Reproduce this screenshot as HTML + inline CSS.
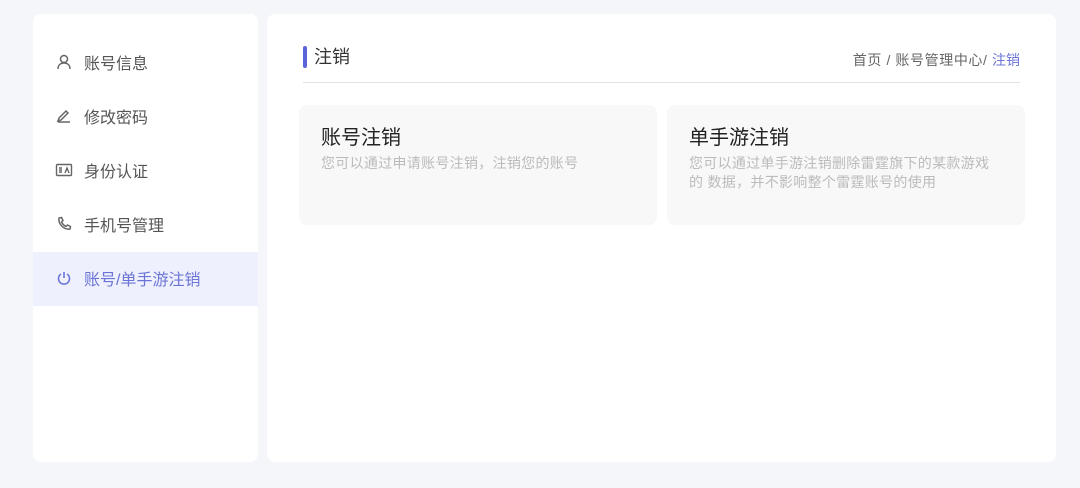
<!DOCTYPE html><html><head><meta charset="utf-8"><style>
*{margin:0;padding:0;box-sizing:border-box}
body{width:1080px;height:488px;background:#f5f6fa;font-family:"Liberation Sans","Noto Sans CJK SC",sans-serif;position:relative;overflow:hidden}
.side{position:absolute;left:33px;top:14px;width:225px;height:448px;background:#fff;border-radius:8px;overflow:hidden}
.item{position:absolute;left:0;width:225px;height:54px;display:flex;align-items:center;padding-left:22px;font-size:16px;color:#555;padding-bottom:2px}
.item svg{width:18px;height:18px;margin-right:11px}
.item.act{background:#eef0fd;color:#6b74d6}
.main{position:absolute;left:267px;top:14px;width:789px;height:448px;background:#fff;border-radius:8px}
.bar{position:absolute;left:36px;top:32px;width:4px;height:22px;background:#5b63d8;border-radius:2px}
.title{position:absolute;left:47px;top:31px;font-size:18px;color:#333;line-height:24px}
.bc{position:absolute;right:36px;top:37px;font-size:14px;color:#666;line-height:18px;letter-spacing:0.6px}
.bc span{color:#6b74d6;letter-spacing:0}
.line{position:absolute;left:36px;top:68px;width:717px;height:1px;background:#e3e3e3}
.card{position:absolute;top:91px;width:358px;height:120px;background:#f8f8f8;border-radius:8px;padding:20px 22px}
.card h3{font-weight:normal;font-size:20px;color:#222;line-height:26px}
.card p{font-size:14px;color:#bbb;line-height:19px;margin-top:3px;letter-spacing:0.3px}
</style></head><body>
<div class="side">
<div class="item" style="top:22px"><svg viewBox="0 0 18 18" fill="none" stroke="#666" stroke-width="1.5"><circle cx="9" cy="6" r="3.5"/><path d="M3 16c0-4 2.5-6 6-6s6 2 6 6"/></svg>账号信息</div>
<div class="item" style="top:76px"><svg viewBox="0 0 18 18" fill="none" stroke="#666" stroke-width="1.5"><path d="M3 14l1-3 7-7 2 2-7 7z M3 15h12"/></svg>修改密码</div>
<div class="item" style="top:130px"><svg viewBox="0 0 18 18" fill="none" stroke="#666" stroke-width="1.4"><rect x="1.5" y="3.5" width="15" height="11" rx="1"/><path d="M4 7h3M4 9h3M4 11h3M10 12l2-5 2 5"/></svg>身份认证</div>
<div class="item" style="top:184px"><svg viewBox="0 0 18 18" fill="none" stroke="#666" stroke-width="1.5"><path d="M4 3l2.5-.5 1.5 3-1.5 1.5c1 2 2.5 3.5 4.5 4.5l1.5-1.5 3 1.5-.5 2.5c-6 1-12-5-11-11z"/></svg>手机号管理</div>
<div class="item act" style="top:238px"><svg viewBox="0 0 18 18" fill="none" stroke="#6b74d6" stroke-width="1.6"><path d="M6 5a5.5 5.5 0 1 0 6 0M9 3v6"/></svg>账号/单手游注销</div>
</div>
<div class="main">
<div class="bar"></div><div class="title">注销</div>
<div class="bc">首页 / 账号管理中心/ <span>注销</span></div>
<div class="line"></div>
<div class="card" style="left:32px"><h3>账号注销</h3><p>您可以通过申请账号注销，注销您的账号</p></div>
<div class="card" style="left:400px"><h3>单手游注销</h3><p>您可以通过单手游注销删除雷霆旗下的某款游戏<br>的 数据，并不影响整个雷霆账号的使用</p></div>
</div>
</body></html>
